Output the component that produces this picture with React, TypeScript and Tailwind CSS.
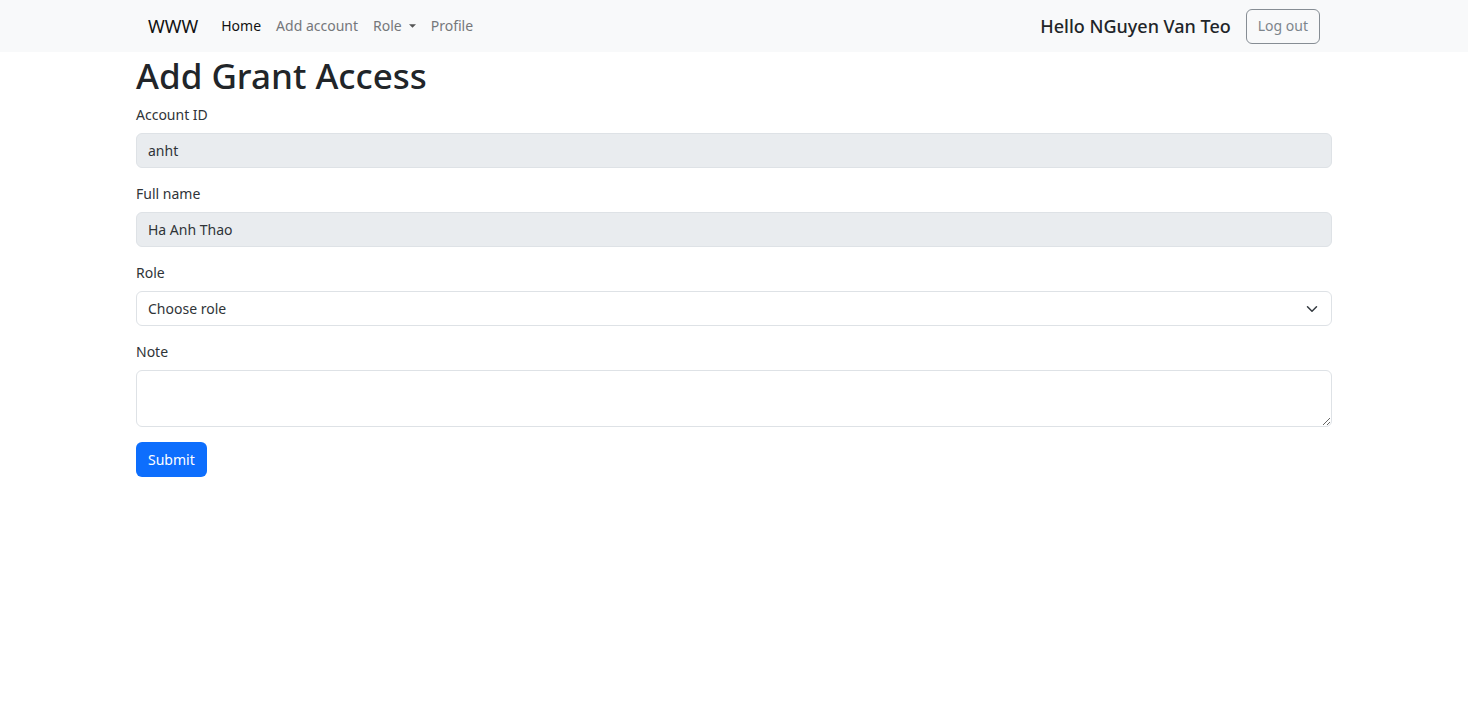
import type { ReactNode } from "react";

const controlClass =
  "block w-full rounded-md border border-[#dee2e6] px-[11px] text-[14px] leading-[22px] text-[#2f3438] outline-none focus:border-[#86b7fe]";

function NavLink({ children, active = false }: { children: ReactNode; active?: boolean }) {
  return (
    <a
      href="#"
      aria-current={active ? "page" : undefined}
      className={active ? "flex items-center text-[#111111]" : "flex items-center text-[#75777a]"}
    >
      {children}
    </a>
  );
}

function Field({ id, label, children }: { id: string; label: string; children: ReactNode }) {
  return (
    <div className="mb-[15px]">
      <label htmlFor={id} className="mb-[7px] block w-fit">
        {label}
      </label>
      {children}
    </div>
  );
}

export default function App() {
  return (
    <div className="min-h-screen bg-white font-['Noto_Sans','Open_Sans',sans-serif] text-[14px] leading-[22px] text-[#2f3438]">
      <header className="bg-[#f8f9fa]">
        <div className="mx-auto flex h-[52px] max-w-[1196px] items-center px-3">
          <a href="#" className="mr-[23px] text-[18px] text-[#111111]">
            WWW
          </a>
          <nav className="flex flex-1 items-center gap-[15px]">
            <NavLink active>Home</NavLink>
            <NavLink>Add account</NavLink>
            <NavLink>
              Role
              <svg className="ml-[7px] h-1 w-[7px]" viewBox="0 0 8 4" fill="#555555" aria-hidden="true">
                <path d="M0 0h8L4 4z" />
              </svg>
            </NavLink>
            <NavLink>Profile</NavLink>
          </nav>
          <span className="mr-[15px] text-[18px] font-medium text-[#212529]">Hello NGuyen Van Teo</span>
          <button
            type="button"
            className="h-[35px] rounded-md border border-[#868d94] px-[11px] text-[#7d858c]"
          >
            Log out
          </button>
        </div>
      </header>

      <main className="mx-auto max-w-[1196px]">
        <h1 className="mb-1 text-[35px] leading-[48px] font-medium text-[#212529]">Add Grant Access</h1>
        <form onSubmit={(event) => event.preventDefault()}>
          <Field id="account-id" label="Account ID">
            <input
              id="account-id"
              type="text"
              readOnly
              defaultValue="anht"
              className={`${controlClass} h-[35px] bg-[#e9ecef]`}
            />
          </Field>
          <Field id="full-name" label="Full name">
            <input
              id="full-name"
              type="text"
              readOnly
              defaultValue="Ha Anh Thao"
              className={`${controlClass} h-[35px] bg-[#e9ecef]`}
            />
          </Field>
          <Field id="role" label="Role">
            <div className="relative">
              <select
                id="role"
                defaultValue=""
                className={`${controlClass} h-[35px] appearance-none bg-white`}
              >
                <option value="">Choose role</option>
              </select>
              <svg
                className="pointer-events-none absolute top-3 right-[13px] h-3 w-[14px]"
                viewBox="0 0 16 16"
                fill="none"
                stroke="#343a40"
                strokeWidth="2"
                strokeLinecap="round"
                strokeLinejoin="round"
                aria-hidden="true"
              >
                <path d="m2 5 6 6 6-6" />
              </svg>
            </div>
          </Field>
          <Field id="note" label="Note">
            <textarea id="note" rows={2} className={`${controlClass} h-[57px] resize-y bg-white py-[6px]`} />
          </Field>
          <button type="submit" className="h-[35px] rounded-md bg-[#0d6efd] px-3 text-white">
            Submit
          </button>
        </form>
      </main>
    </div>
  );
}
